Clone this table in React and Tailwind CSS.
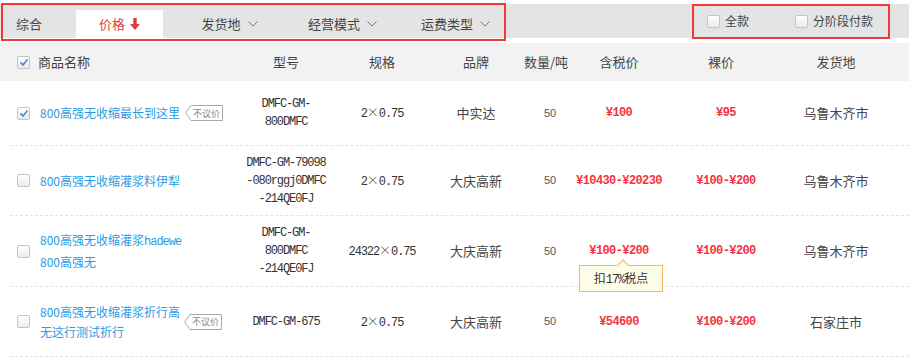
const rows = [
  {
    h: 'h-[65px]',
    checked: true,
    name: ['800高强无收缩最长到这里'],
    tag: true,
    model: ['DMFC-GM-', '800DMFC'],
    spec: ['2', '0.75'],
    brand: '中实达',
    qty: '50',
    tax: '¥100',
    bare: '¥95',
    loc: '乌鲁木齐市',
  },
  {
    h: 'h-[70px]',
    name: ['800高强无收缩灌浆料伊犁'],
    model: ['DMFC-GM-79098', '-080rggj0DMFC', '-214QE0FJ'],
    spec: ['2', '0.75'],
    brand: '大庆高新',
    qty: '50',
    tax: '¥10430-¥20230',
    bare: '¥100-¥200',
    loc: '乌鲁木齐市',
  },
  {
    h: 'h-[71px]',
    name: [
      <>800高强无收缩灌浆<span className="font-['Liberation_Mono',monospace] text-[12px] tracking-[-1px]">hadewe</span></>,
      '800高强无',
    ],
    model: ['DMFC-GM-', '800DMFC', '-214QE0FJ'],
    spec: ['24322', '0.75'],
    brand: '大庆高新',
    qty: '50',
    tax: '¥100-¥200',
    bare: '¥100-¥200',
    loc: '乌鲁木齐市',
  },
  {
    h: 'h-[70px]',
    name: ['800高强无收缩灌浆折行高', '无这行测试折行'],
    tag: true,
    model: ['DMFC-GM-675'],
    spec: ['2', '0.75'],
    brand: '大庆高新',
    qty: '50',
    tax: '¥54600',
    bare: '¥100-¥200',
    loc: '石家庄市',
  },
];

function Checkbox({ checked }) {
  return (
    <span className="w-[13px] h-[13px] shrink-0 rounded-[2px] border border-[#c4c4c4] bg-gradient-to-b from-white to-[#ececec] flex items-center justify-center">
      {checked && (
        <svg width="10" height="9" viewBox="0 0 10 9">
          <path d="M1.5 4.5 L4 7 L8.5 1.5" fill="none" stroke="#4a8fd4" strokeWidth="1.8" />
        </svg>
      )}
    </span>
  );
}

function Chevron() {
  return (
    <svg width="10" height="6" viewBox="0 0 10 6" className="shrink-0">
      <path d="M0.5 0.5 L5 5 L9.5 0.5" fill="none" stroke="#777" strokeWidth="1" />
    </svg>
  );
}

function Tag() {
  return (
    <span className="relative w-[38px] h-[16px] shrink-0 flex items-center justify-center">
      <svg width="38" height="16" viewBox="0 0 38 16" className="absolute inset-0">
        <path d="M6 0.5 H37.5 V15.5 H6 L0.7 8 Z" fill="#fff" stroke="#a9a9a9" strokeWidth="1" />
      </svg>
      <span className="relative pl-[5px] text-[9px] leading-none text-[#888]">不议价</span>
    </span>
  );
}

const cols = 'grid grid-cols-[236px_100px_92px_96px_44px_102px_112px_108px]';
const rowCols = 'grid grid-cols-[226px_100px_92px_96px_44px_102px_112px_108px]';
const mono = "font-['Liberation_Mono',monospace]";

export default function App() {
  return (
    <div className="relative w-[909px] h-[357px] overflow-hidden bg-white text-[#333] font-['Noto_Sans_CJK_SC','Noto_Sans',sans-serif]">
      {/* filter bar */}
      <div className="mt-[4px] h-[34px] bg-[#e4e4e4] flex items-end">
        <div className="w-[76px] h-[28px] pl-[16px] flex items-center text-[13px] text-[#444]">综合</div>
        <div className="w-[87px] h-[28px] bg-white flex items-center justify-center gap-[5px] text-[13px] text-[#e4393c]">
          价格
          <svg width="10" height="12" viewBox="0 0 10 12">
            <path d="M3.3 0 H6.7 V6 H10 L5 12 L0 6 H3.3 Z" fill="#e4393c" />
          </svg>
        </div>
        <div className="w-[10px]" />
        {['发货地', '经营模式', '运费类型'].map((t) => (
          <div key={t} className="w-[113px] h-[28px] flex items-center justify-center gap-[7px] text-[13px] text-[#444]">
            {t}
            <Chevron />
          </div>
        ))}
        <div className="ml-auto mr-[36px] h-[34px] flex items-center text-[12px] text-[#444]">
          <Checkbox />
          <span className="ml-[5px]">全款</span>
          <span className="ml-[46px]"><Checkbox /></span>
          <span className="ml-[5px]">分阶段付款</span>
        </div>
      </div>

      {/* table header */}
      <div className={`${cols} mt-[5px] h-[38px] bg-[#f2f2f2] items-center text-[13px] text-[#444]`}>
        <div className="pl-[17px] flex items-center gap-[8px]">
          <Checkbox checked />
          商品名称
        </div>
        <div className="text-center">型号</div>
        <div className="text-center">规格</div>
        <div className="text-center">品牌</div>
        <div className="text-center whitespace-nowrap">数量/吨</div>
        <div className="text-center">含税价</div>
        <div className="text-center pr-[10px]">裸价</div>
        <div className="text-center">发货地</div>
      </div>

      {/* rows */}
      <div className="ml-[10px]">
        {rows.map((r, i) => (
          <div key={i} className={`${rowCols} ${r.h} items-center border-b border-dashed border-[#e2e2e2]`}>
            <div className="pl-[7px] flex items-center gap-[10px]">
              <Checkbox checked={r.checked} />
              <div className="text-[12px] leading-[20px] text-[#2b9be6] whitespace-nowrap">
                {r.name.map((n, k) => (
                  <div key={k}>{n}</div>
                ))}
              </div>
              {r.tag && (
                <span className={r.name.length > 1 ? 'ml-[-6px]' : 'ml-[-5px]'}>
                  <Tag />
                </span>
              )}
            </div>
            <div className={`${mono} text-center text-[12px] tracking-[-1.1px] leading-[18px] text-[#333]`}>
              {r.model.map((m, k) => (
                <div key={k}>{m}</div>
              ))}
            </div>
            <div className={`${mono} text-center text-[12px] tracking-[-1.1px] text-[#333] whitespace-nowrap`}>
              {r.spec[0]}
              <span className="font-['Noto_Sans_CJK_SC',sans-serif] tracking-normal font-light">×</span>
              {r.spec[1]}
            </div>
            <div className="text-center text-[13px] text-[#444]">{r.brand}</div>
            <div className="text-center pl-[8px] text-[11px] text-[#555] font-['Liberation_Sans',sans-serif]">{r.qty}</div>
            <div className={`${mono} text-center text-[12px] font-bold tracking-[-0.6px] text-[#f5333f] whitespace-nowrap`}>{r.tax}</div>
            <div className={`${mono} text-center text-[12px] font-bold tracking-[-0.6px] text-[#f5333f] whitespace-nowrap`}>{r.bare}</div>
            <div className="text-center text-[13px] text-[#444]">{r.loc}</div>
          </div>
        ))}
      </div>

      {/* tax tooltip */}
      <div className="absolute left-[579px] top-[265px] w-[84px] h-[27px] bg-[#fffde8] border border-[#f7b461] flex items-center justify-center text-[12px] text-[#333]">
        <span className="absolute left-[39px] top-[-5px] w-[8px] h-[8px] rotate-45 bg-[#fffde8] border-l border-t border-[#f7b461]" />
        <span className="relative">扣<span className={`${mono} text-[12px] tracking-[-1px]`}>17%</span>税点</span>
      </div>

      {/* annotation boxes */}
      <div className="absolute left-[1px] top-[3px] w-[505px] h-[38px] border-2 border-[#f03a3a]" />
      <div className="absolute left-[692px] top-[4px] w-[198px] h-[35px] border-2 border-[#f03a3a]" />
    </div>
  );
}
